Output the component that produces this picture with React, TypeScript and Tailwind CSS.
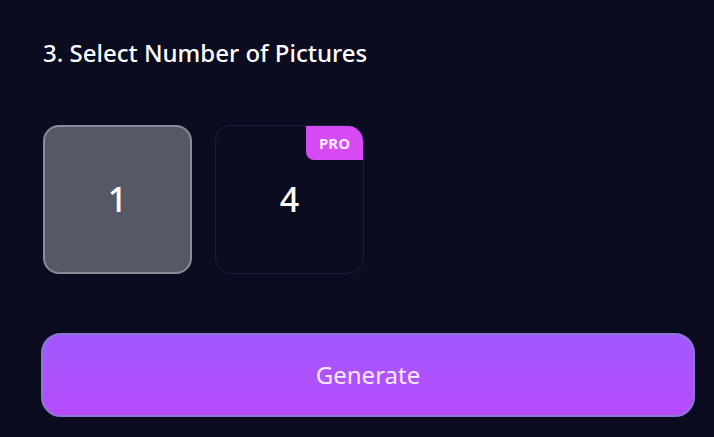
export default function App() {
  return (
    <div
      className="w-[714px] h-[437px] bg-[#0b0c20] overflow-hidden pl-[43px] pr-[19px] pt-[37px]"
      style={{ fontFamily: '"Noto Sans", "Open Sans", sans-serif' }}
    >
      <h2 className="text-[24px] leading-[32px] font-medium text-white">
        3. Select Number of Pictures
      </h2>

      <div className="mt-[56px] flex gap-[23px]">
        <button className="w-[149px] h-[149px] rounded-[16px] border-2 border-[#8c8c98] bg-[#575866] flex items-center justify-center text-white text-[34px] font-medium">
          1
        </button>
        <button className="relative w-[149px] h-[149px] rounded-[16px] border border-[#1b1e3c] bg-[#0b0c20] flex items-center justify-center text-white text-[34px] font-medium">
          4
          <span className="absolute top-0 right-0 w-[57px] h-[34px] rounded-tr-[15px] rounded-bl-[8px] bg-[#d64af4] flex items-center justify-center text-[15px] font-bold text-[#fbe9ff]">
            PRO
          </span>
        </button>
      </div>

      <button className="mt-[59px] -ml-[2px] w-[654px] h-[84px] rounded-[20px] border-2 border-[#8a78d4] bg-gradient-to-b from-[#a159fe] to-[#b84bfb] flex items-center justify-center text-[24px] text-[#f7e9ff]">
        Generate
      </button>
    </div>
  );
}
